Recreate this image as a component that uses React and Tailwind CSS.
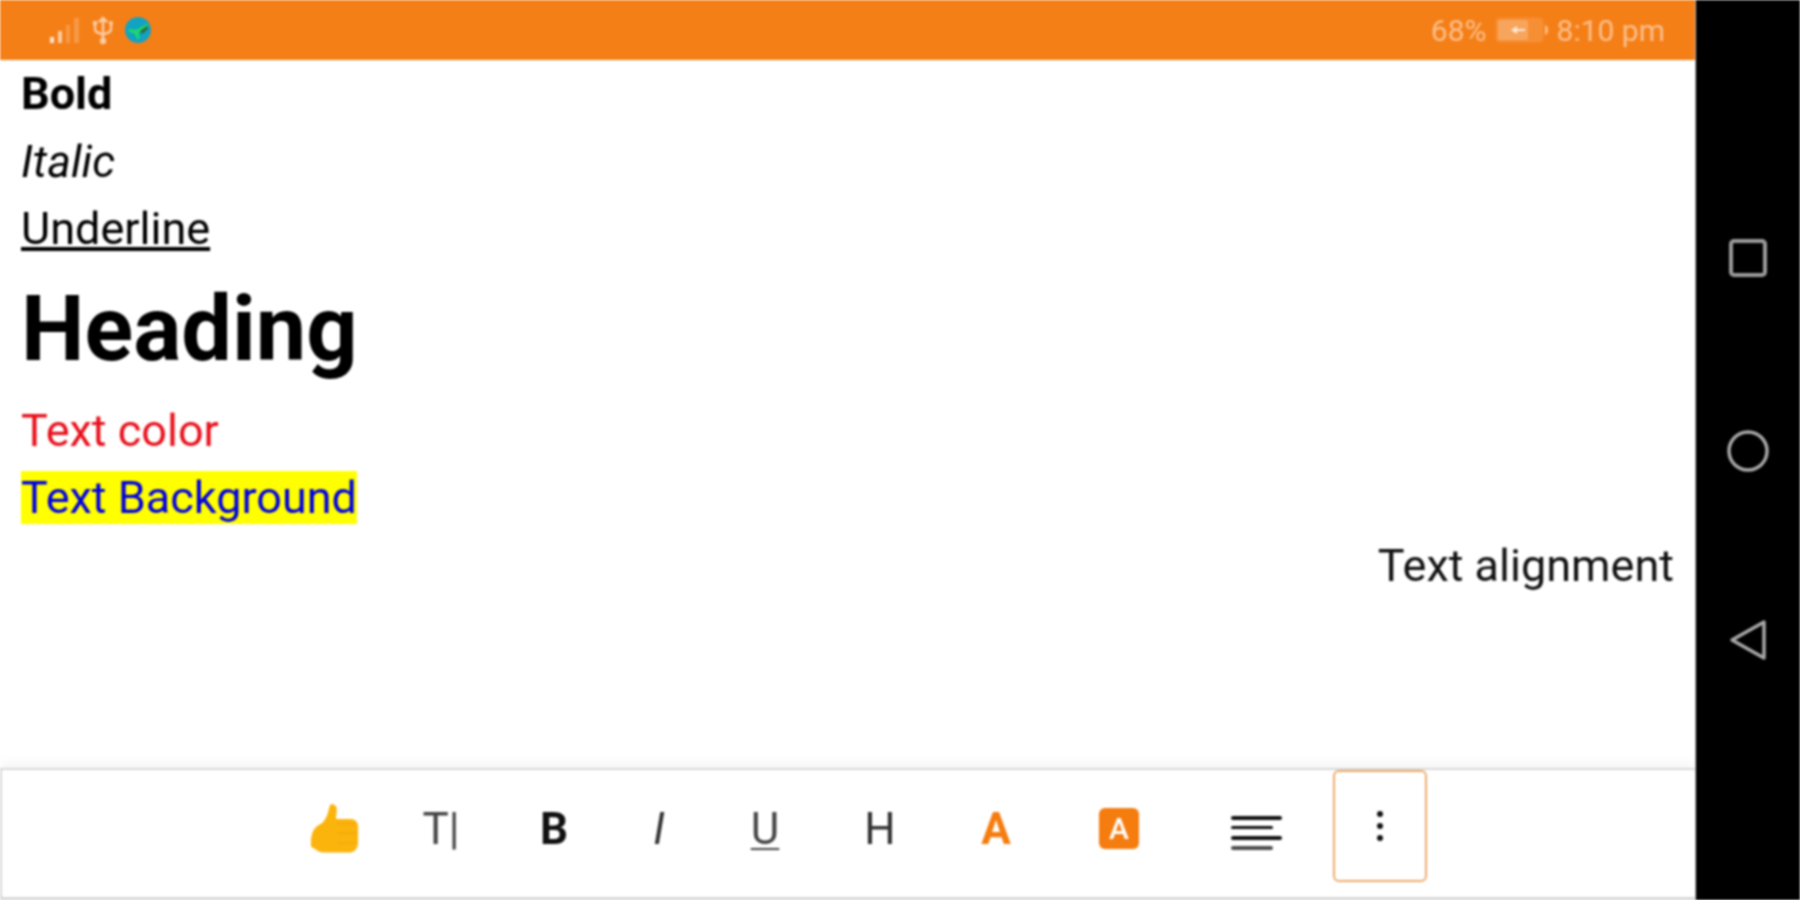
import React from 'react';

const SignalIcon = () => (
  <svg width="32" height="30" viewBox="0 0 32 30" className="text-white">
    <rect x="1" y="22" width="4" height="6" fill="currentColor" opacity="0.8" />
    <rect x="9" y="16" width="4" height="12" fill="currentColor" opacity="0.6" />
    <rect x="17" y="10" width="4" height="18" fill="currentColor" opacity="0.2" />
    <rect x="25" y="3" width="5" height="25" fill="currentColor" opacity="0.2" />
  </svg>
);

const UsbIcon = () => (
  <svg width="22" height="30" viewBox="0 0 22 30" fill="none" stroke="currentColor" strokeWidth="2.4" className="text-white opacity-60">
    <path d="M11 3v24" />
    <path d="M8 6h6l-3-3z" fill="currentColor" />
    <path d="M3 9v5q0 3 4 4l4 2 4-2q4-1 4-4V9" />
    <circle cx="11" cy="26" r="2" fill="currentColor" />
    <rect x="1" y="6" width="4" height="4" fill="currentColor" stroke="none" />
    <circle cx="19" cy="8" r="2" fill="currentColor" stroke="none" />
  </svg>
);

const GlobeIcon = () => (
  <svg width="26" height="26" viewBox="0 0 26 26">
    <circle cx="13" cy="13" r="13" fill="#12a2c4" />
    <path d="M3 14l7 3 2 5 3-1-2-5 10-7-1-2-11 6-7-1z" fill="#1fdc62" />
    <path d="M15 14l7-5 1 3-6 5z" fill="#2a6a3a" />
  </svg>
);

const BatteryIcon = () => (
  <svg width="54" height="26" viewBox="0 0 54 26" className="text-white">
    <rect x="1" y="1" width="47" height="24" rx="4" fill="currentColor" opacity="0.12" stroke="currentColor" strokeOpacity="0.35" strokeWidth="2" />
    <rect x="3" y="3" width="30" height="20" rx="2" fill="currentColor" opacity="0.2" />
    <path d="M16 12h8V9l6 4-6 4v-3h-8z" fill="currentColor" opacity="0.75" transform="rotate(180 23 13)" />
    <path d="M50 8q3 1 3 5t-3 5z" fill="currentColor" opacity="0.5" />
  </svg>
);

const ThumbIcon = () => (
  <svg width="48" height="51" viewBox="0 0 50 52">
    <path d="M20 1q6-1 7 5l-1 10h16q7 1 7 8v18q-1 8-8 9H14q-6 0-9-3l-5-3q-1-12 3-18 3-4 9-7 5-6 6-12z" fill="#fbb40c" />
    <path d="M27 21h19M28 31h20M28 41h19" stroke="#f5a50b" strokeWidth="1.5" fill="none" />
  </svg>
);

const tools = [
  { w: 'w-[104px]', node: <ThumbIcon /> },
  { w: 'w-[108px]', node: <span className="text-[44px] text-[#444]">T|</span> },
  { w: 'w-[118px]', node: <span className="text-[44px] font-bold text-[#111]">B</span> },
  { w: 'w-[92px]', node: <span className="text-[44px] italic text-[#333]">I</span> },
  { w: 'w-[120px]', node: <span className="text-[44px] underline underline-offset-4 decoration-2 text-[#444]">U</span> },
  { w: 'w-[110px]', node: <span className="text-[44px] text-[#333]">H</span> },
  { w: 'w-[122px]', node: <span className="text-[44px] font-bold text-[#f57c0f]">A</span> },
  {
    w: 'w-[124px]',
    node: (
      <span className="flex h-[41px] w-[40px] items-center justify-center rounded-md bg-[#f57c0f] text-[30px] font-medium text-white">A</span>
    ),
  },
  {
    w: 'w-[152px]',
    node: (
      <svg width="52" height="36" viewBox="0 0 52 36" className="mt-2 text-[#111]" fill="currentColor">
        <rect y="1" width="51" height="4" rx="2" />
        <rect y="11" width="42" height="3" rx="1.5" />
        <rect y="21" width="51" height="4" rx="2" />
        <rect y="31" width="42" height="4" rx="2" opacity="0.75" />
      </svg>
    ),
  },
];

export default function App() {
  return (
    <div className="flex h-[900px] w-[1800px] overflow-hidden bg-black font-['Roboto',sans-serif] blur-[0.8px]">
      <div className="flex w-[1695px] flex-col bg-white">
        <div className="flex h-[60px] items-center justify-between bg-[#f57f17] pl-[49px] pr-[30px]">
          <div className="flex items-center gap-[11px]">
            <SignalIcon />
            <UsbIcon />
            <GlobeIcon />
          </div>
          <div className="flex items-center gap-[8px] text-[30px] text-white/50">
            <span>68%</span>
            <BatteryIcon />
            <span>8:10 pm</span>
          </div>
        </div>

        <div className="flex flex-1 flex-col px-[21px] text-[45px] leading-[67.5px] text-black">
          <div className="font-bold">Bold</div>
          <div className="italic">Italic</div>
          <div className="underline">Underline</div>
          <div className="text-[90px] font-bold leading-[134px]">Heading</div>
          <div className="text-[#e8101c]">Text color</div>
          <div>
            <span className="bg-[#ffff00] text-[#0000e0]">Text Background</span>
          </div>
          <div className="text-right text-[#111]">Text alignment</div>
        </div>

        <div className="flex h-[132px] border-t-2 border-b-[3px] border-l-2 border-[#d8d8d8] bg-white pl-[281px] shadow-[0_-6px_10px_rgba(0,0,0,0.04)]">
          {tools.map((tool, i) => (
            <div key={i} className={`flex items-center justify-center pb-[10px] ${tool.w}`}>
              {tool.node}
            </div>
          ))}
          <div className="flex h-[112px] w-[94px] items-center justify-center rounded-md border-2 border-[#eeaa6c]">
            <div className="flex flex-col gap-[6px]">
              <span className="h-[6px] w-[6px] rounded-full bg-[#111]" />
              <span className="h-[6px] w-[6px] rounded-full bg-[#111]" />
              <span className="h-[6px] w-[6px] rounded-full bg-[#111]" />
            </div>
          </div>
        </div>
      </div>

      <div className="flex w-[105px] flex-col items-center border-l border-[#bbb] pt-[239px]">
        <svg width="38" height="38" viewBox="0 0 38 38" fill="none" stroke="#9a9a9a" strokeWidth="4">
          <rect x="2" y="2" width="34" height="34" rx="3" />
        </svg>
        <svg width="42" height="42" viewBox="0 0 42 42" fill="none" stroke="#a8a8a8" strokeWidth="3.5" className="mt-[153px]">
          <circle cx="21" cy="21" r="19" />
        </svg>
        <svg width="38" height="42" viewBox="0 0 38 42" fill="none" stroke="#a8a8a8" strokeWidth="3.5" strokeLinejoin="round" className="mt-[147px]">
          <path d="M35 3v36L3 21z" />
        </svg>
      </div>
    </div>
  );
}
